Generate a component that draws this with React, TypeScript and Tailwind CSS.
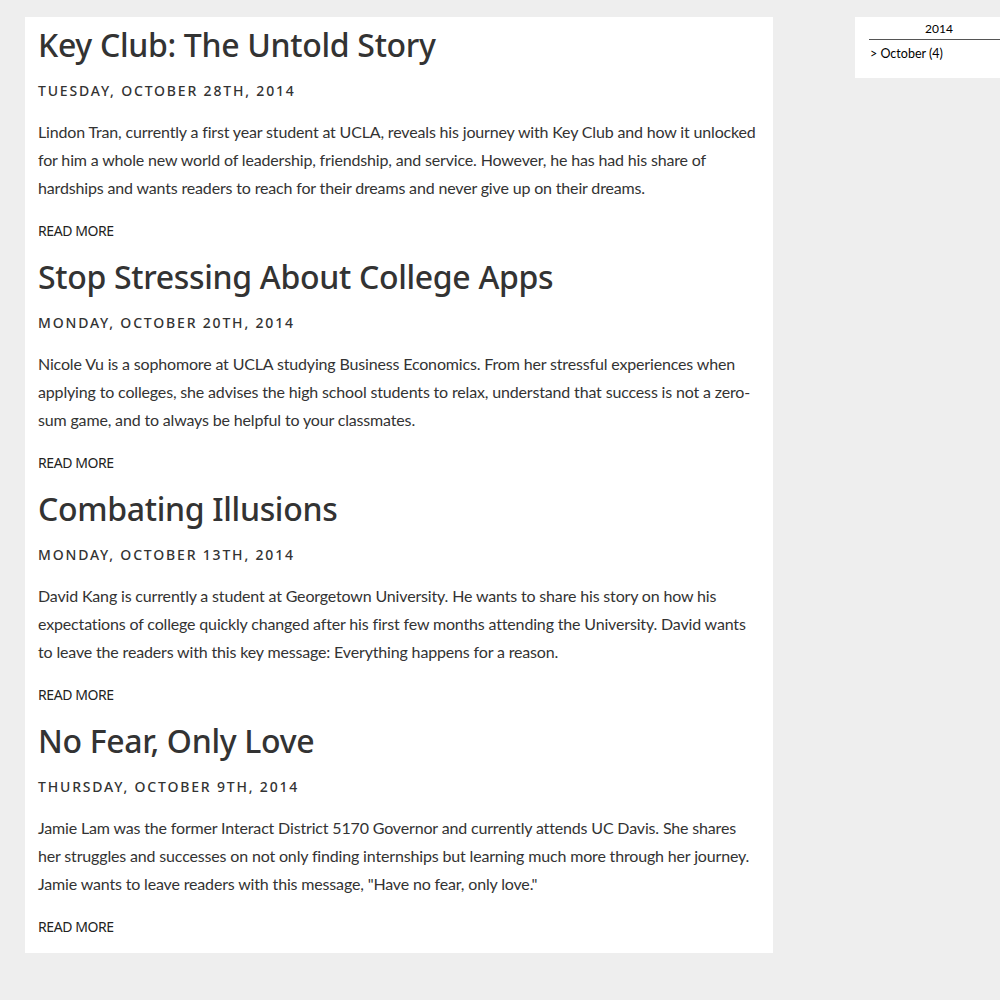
const posts = [
  {
    title: "Key Club: The Untold Story",
    date: "Tuesday, October 28th, 2014",
    body: "Lindon Tran, currently a first year student at UCLA, reveals his journey with Key Club and how it unlocked for him a whole new world of leadership, friendship, and service. However, he has had his share of hardships and wants readers to reach for their dreams and never give up on their dreams.",
  },
  {
    title: "Stop Stressing About College Apps",
    date: "Monday, October 20th, 2014",
    body: "Nicole Vu is a sophomore at UCLA studying Business Economics. From her stressful experiences when applying to colleges, she advises the high school students to relax, understand that success is not a zero-sum game, and to always be helpful to your classmates.",
  },
  {
    title: "Combating Illusions",
    date: "Monday, October 13th, 2014",
    body: "David Kang is currently a student at Georgetown University. He wants to share his story on how his expectations of college quickly changed after his first few months attending the University. David wants to leave the readers with this key message: Everything happens for a reason.",
  },
  {
    title: "No Fear, Only Love",
    date: "Thursday, October 9th, 2014",
    body: 'Jamie Lam was the former Interact District 5170 Governor and currently attends UC Davis. She shares her struggles and successes on not only finding internships but learning much more through her journey. Jamie wants to leave readers with this message, "Have no fear, only love."',
  },
];

export default function App() {
  return (
    <div className="min-h-[1000px] w-[1000px] overflow-hidden bg-[#eeeeee] font-['Lato',sans-serif] text-[#333]">
      <div className="flex items-start pt-[17px] pl-[25px]">
        {/* Posts */}
        <main className="w-[748px] shrink-0 bg-white px-[13px] pt-[9px] pb-[18px]">
          {posts.map((post) => (
            <article key={post.title} className="mb-[19px] last:mb-0">
              <h2 className="font-['Noto_Sans',sans-serif] font-medium text-[32px] leading-[38px] text-[#333] tracking-[-0.01em]">
                {post.title}
              </h2>
              <p className="mt-[19px] font-['Noto_Sans',sans-serif] font-medium text-[14px] leading-[16px] uppercase tracking-[0.13em] text-[#333]">
                {post.date}
              </p>
              <p className="mt-[19px] text-[16px] leading-[28px] tracking-[-0.01em] text-[#333]">
                {post.body}
              </p>
              <a
                href="#"
                className="mt-[21px] block font-['Noto_Sans',sans-serif] text-[14px] leading-[16px] uppercase tracking-[-0.03em] text-[#222]"
              >
                Read More
              </a>
            </article>
          ))}
        </main>

        {/* Archive */}
        <aside className="ml-[82px] w-[168px] shrink-0 bg-white pl-[14px] pt-[4px] pb-[16px]">
          <div className="w-[140px] border-b border-[#555] pb-[2px] text-center text-[12px] leading-[16px] text-black">
            2014
          </div>
          <div className="mt-[6px] pl-[1px] text-[12.5px] leading-[16px] text-black">
            &gt; October (4)
          </div>
        </aside>
      </div>
    </div>
  );
}
